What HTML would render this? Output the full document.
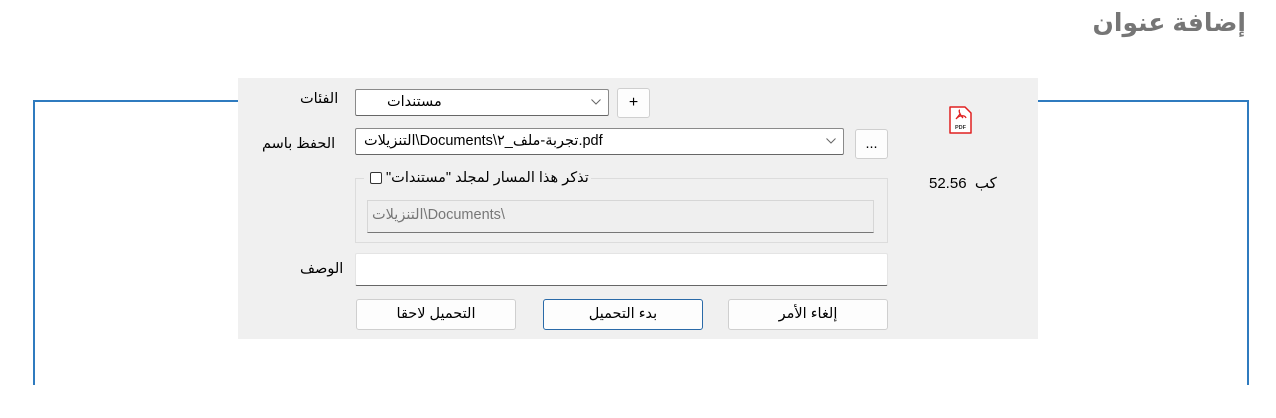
<!DOCTYPE html>
<html><head><meta charset="utf-8"><style>
body{margin:0;width:1276px;height:418px;background:#fff;position:relative;overflow:hidden;font-family:"Liberation Sans","DejaVu Sans",sans-serif;font-size:14.5px;color:#000}
.a{position:absolute}
.t{white-space:nowrap}
.box{position:absolute;background:#fff;border:1px solid #8a8a8a;border-bottom-color:#666;border-radius:2px;box-sizing:border-box}
.btn{position:absolute;background:#fdfdfd;border:1px solid #cfcfcf;border-radius:3px;box-sizing:border-box;text-align:center;font-size:14.5px}
.chev{position:absolute;right:7px;top:9px}
</style></head><body>
<div class="a t" style="right:30px;top:8px;font-size:25px;font-weight:bold;color:#767676">إضافة عنوان</div>
<div class="a" style="left:33px;top:100px;width:1216px;height:285px;border:2px solid #2f7bbf;border-bottom:none;box-sizing:border-box"></div>
<div class="a" style="left:238px;top:78px;width:800px;height:261px;background:#f0f0f0"></div>

<div class="a t" style="left:300px;top:91px">الفئات</div>
<div class="box" style="left:355px;top:89px;width:254px;height:27px"><span class="a t" style="left:31px;top:4px">مستندات</span><svg class="chev" width="10" height="6"><path d="M0.5 0.5L5 5L9.5 0.5" fill="none" stroke="#666"/></svg></div>
<div class="btn" style="left:617px;top:88px;width:33px;height:30px;line-height:28px;font-size:16px">+</div>

<div class="a t" style="left:262px;top:136px">الحفظ باسم</div>
<div class="box" style="left:355px;top:128px;width:489px;height:27px"><span class="a t" dir="ltr" style="left:8px;top:4px"><bdi dir="rtl">التنزيلات</bdi>\Documents\<bdi dir="rtl">تجربة-ملف_٢</bdi>.pdf</span><svg class="chev" width="10" height="6"><path d="M0.5 0.5L5 5L9.5 0.5" fill="none" stroke="#666"/></svg></div>
<div class="btn" style="left:855px;top:129px;width:33px;height:30px;line-height:28px">...</div>

<div class="a" style="left:355px;top:178px;width:533px;height:65px;border:1px solid #dcdcdc;box-sizing:border-box"></div>
<div class="a t" dir="rtl" style="left:364px;top:170px;background:#f0f0f0;padding:0 2px 0 6px">تذكر هذا المسار لمجلد "مستندات" <span style="display:inline-block;width:10px;height:10px;border:1px solid #333;border-radius:2px;vertical-align:middle;background:#fff"></span></div>
<div class="a" style="left:367px;top:200px;width:507px;height:33px;background:#efefef;border:1px solid #d6d6d6;border-bottom:1px solid #777;box-sizing:border-box"><span class="a t" dir="ltr" style="left:4px;top:6px;color:#777"><bdi dir="rtl">التنزيلات</bdi>\Documents\</span></div>

<div class="a t" style="left:300px;top:261px">الوصف</div>
<div class="box" style="left:355px;top:253px;width:533px;height:33px;border-color:#e4e4e4;border-bottom-color:#666"></div>

<div class="btn" style="left:356px;top:299px;width:160px;height:31px;line-height:29px">التحميل لاحقا</div>
<div class="btn" style="left:543px;top:299px;width:160px;height:31px;line-height:29px;border-color:#2a6aa8">بدء التحميل</div>
<div class="btn" style="left:728px;top:299px;width:160px;height:31px;line-height:29px">إلغاء الأمر</div>

<svg class="a" style="left:948px;top:105px" width="26" height="30" viewBox="0 0 26 30">
<path d="M2 2h15l6 6v20H2z" fill="#fff" stroke="#e02020" stroke-width="1.5" stroke-linejoin="round"/>
<path d="M12 5c-2 0 0 5 3 8M9 13c3-3 8-3 9 0M12 9l-4 5" fill="none" stroke="#e02020" stroke-width="1.3"/>
<text x="12.5" y="24" font-size="5.5" font-family="Liberation Sans" font-weight="bold" text-anchor="middle" fill="#333">PDF</text>
</svg>
<div class="a t" style="left:929px;top:174px;font-size:15px">52.56&nbsp;&nbsp;كب</div>
</body></html>
